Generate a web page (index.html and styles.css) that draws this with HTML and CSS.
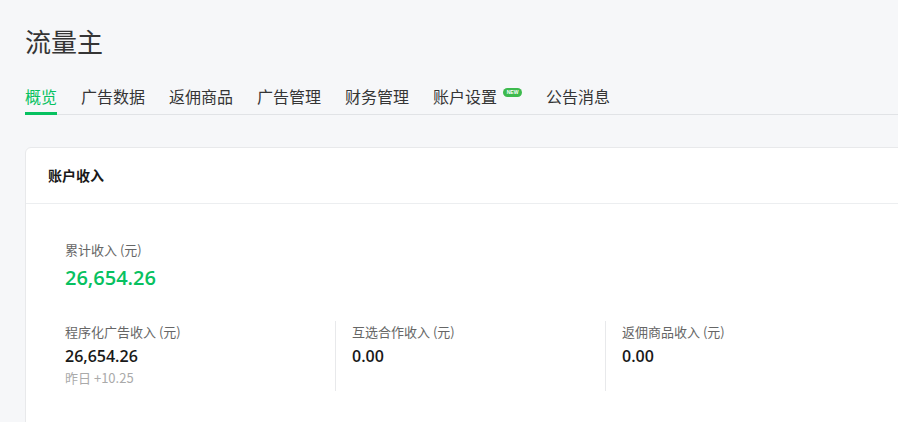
FILE: index.html
```html
<!DOCTYPE html>
<html lang="zh-CN">
<head>
<meta charset="utf-8">
<title>流量主</title>
<link rel="stylesheet" href="styles.css">
</head>
<body>
<div class="page">
	<h1 class="title">流量主</h1>
	<div class="tabs">
		<a class="tab active">概览</a>
		<a class="tab">广告数据</a>
		<a class="tab">返佣商品</a>
		<a class="tab">广告管理</a>
		<a class="tab">财务管理</a>
		<a class="tab">账户设置<span class="badge">NEW</span></a>
		<a class="tab">公告消息</a>
	</div>

	<div class="card">
		<div class="card-head">账户收入</div>
		<div class="card-body">
			<div class="total">
				<div class="label">累计收入 (元)</div>
				<div class="total-value">26,654.26</div>
			</div>
			<div class="cols">
				<div class="col">
					<div class="label">程序化广告收入 (元)</div>
					<div class="value">26,654.26</div>
					<div class="sub">昨日 +10.25</div>
				</div>
				<div class="col">
					<div class="label">互选合作收入 (元)</div>
					<div class="value">0.00</div>
				</div>
				<div class="col">
					<div class="label">返佣商品收入 (元)</div>
					<div class="value">0.00</div>
				</div>
			</div>
		</div>
	</div>
</div>
</body>
</html>
```

FILE: styles.css
```css
html, body {
	margin: 0;
	padding: 0;
	overflow: hidden;
}
body {
	background: #f6f7f9;
	font-family: "Segoe UI", "Open Sans", "Noto Sans CJK SC", sans-serif;
	color: #353535;
}
.page {
	width: 1100px;
	padding: 23px 0 0 25px;
}
.title {
	margin: 0;
	font-size: 26px;
	font-weight: normal;
	line-height: 36px;
	color: #353535;
	font-family: "Noto Sans CJK SC", sans-serif;
}
.tabs {
	display: flex;
	gap: 24px;
	margin-top: 26px;
	border-bottom: 1px solid #e1e3e6;
}
.tab {
	position: relative;
	font-size: 16px;
	line-height: 22px;
	padding-bottom: 7px;
	color: #353535;
	font-family: "Noto Sans CJK SC", sans-serif;
	display: flex;
}
.tab.active {
	color: #07c160;
}
.tab.active::after {
	content: "";
	position: absolute;
	left: 0;
	right: 0;
	bottom: -1px;
	height: 3px;
	background: #07c160;
}
.badge {
	margin: 3px 0 0 6px;
	width: 19px;
	height: 9px;
	border-radius: 5px;
	background: #3dba4e;
	color: #fff;
	font-size: 5px;
	line-height: 9px;
	text-align: center;
	font-family: "Liberation Sans", sans-serif;
	font-weight: bold;
}
.card {
	margin-top: 32px;
	background: #fff;
	border: 1px solid #e8e9eb;
	border-radius: 6px;
	min-height: 300px;
}
.card-head {
	height: 55px;
	line-height: 55px;
	padding-left: 22px;
	font-size: 14px;
	font-weight: bold;
	color: #191919;
	font-family: "Noto Sans CJK SC", sans-serif;
	border-bottom: 1px solid #eceef0;
}
.card-body {
	padding: 37px 0 0 39px;
}
.label {
	font-size: 13px;
	line-height: 18px;
	color: #666;
	font-family: "Noto Sans CJK SC", sans-serif;
}
.total-value {
	margin-top: 7px;
	font-size: 20px;
	line-height: 24px;
	font-weight: 600;
	color: #07c160;
}
.cols {
	display: flex;
	margin-top: 31px;
}
.col {
	width: 253px;
	min-height: 68px;
	padding: 2px 0 0 16px;
	border-left: 1px solid #e8e9eb;
}
.col:first-child {
	border-left: none;
	padding-left: 0;
	width: 270px;
}
.value {
	margin-top: 4px;
	font-size: 16px;
	line-height: 22px;
	font-weight: 600;
	color: #191919;
}
.sub {
	margin-top: 2px;
	font-size: 13px;
	line-height: 18px;
	color: #aaa;
	font-family: "Noto Sans CJK SC", sans-serif;
}
```
